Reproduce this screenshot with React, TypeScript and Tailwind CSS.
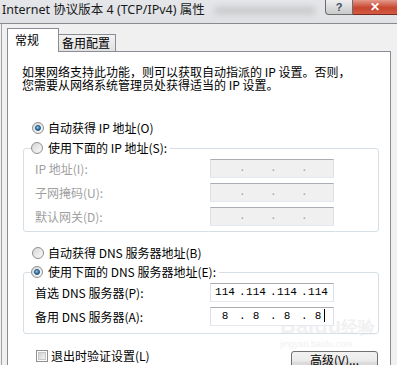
import React from "react";

const FONT = "font-['Noto_Sans_CJK_SC','Noto_Sans',sans-serif]";

function Radio({ checked }: { checked?: boolean }) {
  return (
    <span className="w-[12px] h-[12px] rounded-full border border-[#8e8f8f] bg-[linear-gradient(135deg,#d6d6d6,#fbfbfb)] flex items-center justify-center shrink-0">
      {checked && (
        <span className="w-[6px] h-[6px] rounded-full bg-[radial-gradient(circle_at_40%_35%,#8fd0f5,#1f5f96_75%)] border border-[#1d4f7b]" />
      )}
    </span>
  );
}

function Checkbox() {
  return (
    <span className="w-[12px] h-[12px] border border-[#8e8f8f] bg-white flex items-center justify-center shrink-0">
      <span className="w-[8px] h-[8px] bg-[linear-gradient(135deg,#cfcfcf,#f6f6f6)] border border-[#c8c8c8]" />
    </span>
  );
}

function IpField({ values, disabled, cursor }: { values?: string[]; disabled?: boolean; cursor?: boolean }) {
  const cells = values ?? ["", "", "", ""];
  return (
    <div
      className={
        "w-[124px] h-[19px] border border-t-[#abadb3] border-l-[#dbdfe6] border-r-[#dbdfe6] border-b-[#e3e9ef] flex items-center font-['Liberation_Mono',monospace] text-[11px] " +
        (disabled ? "bg-[#f0f0f0] text-[#a0a0a0]" : "bg-white text-black")
      }
    >
      {cells.map((v, i) => (
        <React.Fragment key={i}>
          <span className="w-[28px] text-center relative">
            {v}
            {cursor && i === 3 && (
              <span className="absolute right-[7px] top-[1px] w-[1px] h-[13px] bg-black" />
            )}
          </span>
          {i < 3 && <span className="w-[3px] text-center leading-none">.</span>}
        </React.Fragment>
      ))}
    </div>
  );
}

function FieldRow({
  label,
  disabled,
  values,
  cursor,
}: {
  label: string;
  disabled?: boolean;
  values?: string[];
  cursor?: boolean;
}) {
  return (
    <div className="flex items-center h-[19px]">
      <span className={"ml-[11px] w-[175px] whitespace-nowrap " + (disabled ? "text-[#a0a0a0]" : "text-black")}>
        {label}
      </span>
      <IpField disabled={disabled} values={values} cursor={cursor} />
    </div>
  );
}

export default function App() {
  return (
    <div className={"w-[397px] h-[365px] overflow-hidden bg-[#f0f0f0] text-[12px] text-black " + FONT}>
      {/* Title bar */}
      <div className="h-[24px] flex items-start border-b border-[#8a8a8a] bg-[linear-gradient(to_bottom,#e4e6e9,#dfe1e4)]">
        <span className="pl-[2px] pt-[1px] leading-[18px] text-[12.5px] font-['Noto_Sans','Noto_Sans_CJK_SC',sans-serif] text-[#1a1a1a] whitespace-nowrap">
          Internet 协议版本 4 (TCP/IPv4) 属性
        </span>
        <span className="ml-[10px] mt-[7px] w-[100px] h-[7px] bg-[#b5b5b5] blur-[3px] opacity-60" />
        <div className="ml-auto flex">
          <div className="w-[28px] h-[15px] border border-t-0 border-[#6d6d6d] rounded-bl-[4px] bg-[linear-gradient(to_bottom,#eeeeee,#c9c9c9)] flex items-center justify-center text-[#3b5068] font-bold text-[11px] leading-none font-['Liberation_Sans',sans-serif]">
            ?
          </div>
          <div className="w-[44px] h-[15px] border-b border-[#7a2a20] bg-[linear-gradient(to_bottom,#e49a8b,#c8462f_55%,#d35a42)] flex items-center justify-center text-white font-bold text-[12px] leading-none font-['Liberation_Sans',sans-serif]">
            ✕
          </div>
        </div>
      </div>

      {/* Body */}
      <div className="ml-[1px] border-l border-[#a3a3a3] h-[341px] pl-[5px]">
        {/* Tabs */}
        <div className="flex items-end pt-[4px] mb-[-1px] relative z-10">
          <div className="w-[52px] h-[24px] bg-white border border-b-0 border-[#898c95] pl-[7px] pt-[4px] leading-[14px]">
            常规
          </div>
          <div className="w-[57px] h-[17px] mb-[1px] border-t border-r border-[#898c95] bg-[linear-gradient(to_bottom,#f2f2f2,#e2e2e2)] pl-[3px] leading-[16px] whitespace-nowrap">
            备用配置
          </div>
        </div>

        {/* Panel */}
        <div className="w-[384px] h-[320px] bg-white border border-[#898c95] flex flex-col relative">
          {/* Baidu watermark */}
          <div className="absolute left-[272px] top-[263px] flex flex-col items-start">
            <span className="text-[22px] font-bold leading-[22px] text-[#f1f1f1] font-['Liberation_Sans',sans-serif] whitespace-nowrap">
              Baidu<span className="text-[17px]">经验</span>
            </span>
            <span className="text-[9px] leading-[10px] text-[#f0f0f0] font-['Liberation_Sans',sans-serif]">
              jingyan.baidu.com
            </span>
          </div>

          <p className="mt-[13px] ml-[14px] leading-[13px] whitespace-nowrap">
            如果网络支持此功能，则可以获取自动指派的 IP 设置。否则，
            <br />
            您需要从网络系统管理员处获得适当的 IP 设置。
          </p>

          <div className="mt-[30px] ml-[24px] h-[14px] flex items-center gap-[4px]">
            <Radio checked />
            <span>自动获得 IP 地址(O)</span>
          </div>

          <fieldset className="mt-[6px] ml-[15px] w-[356px] border border-[#d5dfe5] rounded-[3px] pb-[5px]">
            <legend className="ml-[7px] h-[14px] flex items-center gap-[5px] pr-[3px]">
              <Radio />
              <span>使用下面的 IP 地址(S):</span>
            </legend>
            <div className="mt-[4px] flex flex-col gap-[5px]">
              <FieldRow label="IP 地址(I):" disabled />
              <FieldRow label="子网掩码(U):" disabled />
              <FieldRow label="默认网关(D):" disabled />
            </div>
          </fieldset>

          <div className="mt-[14px] ml-[24px] h-[14px] flex items-center gap-[4px]">
            <Radio />
            <span>自动获得 DNS 服务器地址(B)</span>
          </div>

          <fieldset className="mt-[5px] ml-[15px] w-[356px] border border-[#d5dfe5] rounded-[3px] pb-[7px] relative">
            <legend className="ml-[7px] h-[14px] flex items-center gap-[5px] pr-[3px]">
              <Radio checked />
              <span>使用下面的 DNS 服务器地址(E):</span>
            </legend>
            <div className="mt-[4px] flex flex-col gap-[5px]">
              <FieldRow label="首选 DNS 服务器(P):" values={["114", "114", "114", "114"]} />
              <FieldRow label="备用 DNS 服务器(A):" values={["8", "8", "8", "8"]} cursor />
            </div>
          </fieldset>

          <div className="mt-[16px] flex items-start">
            <div className="ml-[28px] h-[12px] flex items-center gap-[3px]">
              <Checkbox />
              <span>退出时验证设置(L)</span>
            </div>
            <div className="ml-auto mr-[12px] mt-[1px] w-[87px] h-[22px] rounded-[3px] border border-[#707070] bg-[linear-gradient(to_bottom,#f2f2f2,#ebebeb_45%,#dddddd_50%,#cfcfcf)] flex items-start justify-center pt-[1px] leading-[14px]">
              高级(V)...
            </div>
          </div>
        </div>
      </div>
    </div>
  );
}
